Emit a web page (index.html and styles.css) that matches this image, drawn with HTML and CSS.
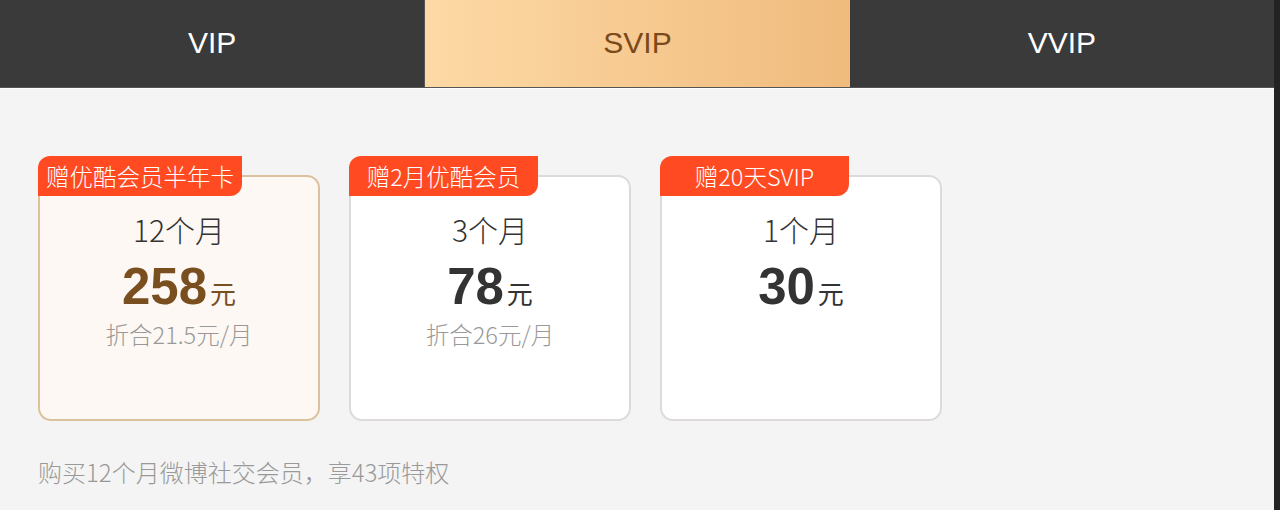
FILE: index.html
```html
<!DOCTYPE html>
<html lang="zh-CN">
<head>
<meta charset="utf-8">
<title>会员</title>
<link rel="stylesheet" href="styles.css">
</head>
<body>
<div class="page">
  <div class="main">
    <nav class="tabs">
      <div class="tab">VIP</div>
      <div class="tab tab-active">SVIP</div>
      <div class="tab">VVIP</div>
    </nav>
    <section class="content">
      <div class="plans">
        <div class="card card-selected">
          <div class="tag">赠优酷会员半年卡</div>
          <div class="period">12个月</div>
          <div class="price"><span class="num">258</span><span class="unit">元</span></div>
          <div class="avg">折合21.5元/月</div>
        </div>
        <div class="card">
          <div class="tag">赠2月优酷会员</div>
          <div class="period">3个月</div>
          <div class="price"><span class="num">78</span><span class="unit">元</span></div>
          <div class="avg">折合26元/月</div>
        </div>
        <div class="card">
          <div class="tag">赠20天SVIP</div>
          <div class="period">1个月</div>
          <div class="price"><span class="num">30</span><span class="unit">元</span></div>
        </div>
      </div>
      <p class="note">购买12个月微博社交会员，享43项特权</p>
    </section>
  </div>
  <div class="edge"></div>
</div>
</body>
</html>
```

FILE: styles.css
```css
* { box-sizing: border-box; }
html, body { margin: 0; padding: 0; }
body {
  width: 1280px;
  height: 510px;
  overflow: hidden;
  background: #f4f4f4;
  font-family: "Noto Sans CJK SC", "Noto Sans", sans-serif;
}
.page {
  display: flex;
  height: 510px;
}
.main {
  flex: 1;
  display: flex;
  flex-direction: column;
  background: #f4f4f4;
}
.edge {
  width: 6px;
  background: #232323;
}
.tabs {
  display: flex;
  height: 88px;
  background: #3a3a3a;
  border-bottom: 1px solid #555;
  box-shadow: 0 1px 0 #fff;
}
.tab {
  flex: 1;
  display: flex;
  align-items: center;
  justify-content: center;
  color: #fff;
  font-family: "Liberation Sans", Arial, sans-serif;
  font-size: 30px;
  padding-bottom: 1px;
}
.tab-active {
  background: linear-gradient(90deg, #fdd9a5 0%, #f0bb7d 100%);
  color: #7a4a1b;
  border-left: 1px solid #555;
}
.content {
  padding: 87px 38px 0;
}
.plans {
  display: flex;
  gap: 29px;
}
.card {
  position: relative;
  width: 282px;
  height: 246px;
  background: #fff;
  border: 2px solid #dedada;
  border-radius: 13px;
  text-align: center;
  padding-top: 34px;
}
.card-selected {
  background: #fdf8f3;
  border-color: #dcc29c;
}
.tag {
  position: absolute;
  top: -21px;
  left: -2px;
  min-width: 189px;
  height: 40px;
  line-height: 40px;
  padding: 0 8px;
  background: #ff4a22;
  color: #fff;
  font-size: 23.5px;
  font-weight: 300;
  text-align: center;
  border-radius: 12px 0 12px 0;
  white-space: nowrap;
}
.period {
  font-size: 30px;
  font-weight: 300;
  line-height: 36px;
  color: #333;
}
.price {
  margin-top: 12px;
  line-height: 56px;
  color: #333;
}
.card-selected .price { color: #7a4f1f; }
.num {
  font-family: "Liberation Sans", Arial, sans-serif;
  font-weight: bold;
  font-size: 51px;
}
.unit {
  font-size: 26px;
  font-weight: 400;
  margin-left: 3px;
}
.avg {
  margin-top: -6px;
  font-size: 23.5px;
  font-weight: 300;
  line-height: 30px;
  color: #999;
}
.note {
  margin: 36px 0 0;
  font-size: 24px;
  font-weight: 300;
  line-height: 30px;
  color: #999;
}
```
